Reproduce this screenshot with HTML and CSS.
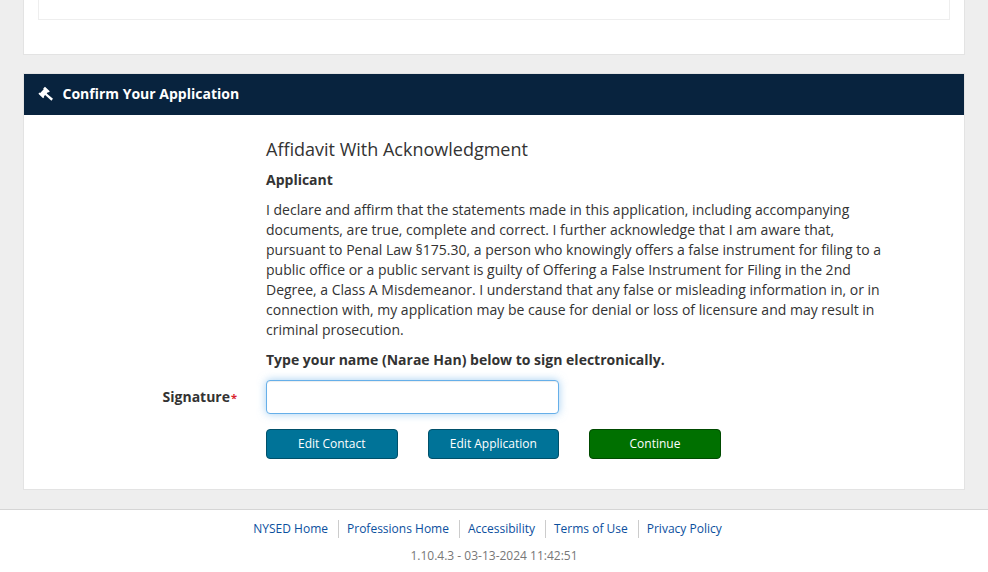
FILE: index.html
```html
<!DOCTYPE html>
<html lang="en">
<head>
<meta charset="utf-8">
<title>Confirm Your Application</title>
<link rel="stylesheet" href="styles.css">
</head>
<body>
<main class="main">
  <section class="card card-top">
    <div class="inner-box"></div>
  </section>
  <section class="card card-confirm">
    <header class="card-header">
      <svg class="gavel" viewBox="0 0 16 16" aria-hidden="true">
        <path d="M7 .8 11.8 5.2 10.7 6.4 10.1 5.9 8.7 7.4 15 12.8 13.4 14.8 7.1 8.9 5.8 10.4 6.3 10.9 5.1 12.2.4 7.8 1.6 6.6 2.2 7.1 5.7 3.2 5.2 2.6z" fill="#fff"/>
      </svg>
      <h2 class="card-title">Confirm Your Application</h2>
    </header>
    <div class="card-body">
      <div class="affidavit">
        <h3 class="affidavit-title">Affidavit With Acknowledgment</h3>
        <p class="role">Applicant</p>
        <p class="statement">I declare and affirm that the statements made in this application, including accompanying documents, are true, complete and correct. I further acknowledge that I am aware that, pursuant to Penal Law §175.30, a person who knowingly offers a false instrument for filing to a public office or a public servant is guilty of Offering a False Instrument for Filing in the 2nd Degree, a Class A Misdemeanor. I understand that any false or misleading information in, or in connection with, my application may be cause for denial or loss of licensure and may result in criminal prosecution.</p>
        <p class="sign-note">Type your name (Narae Han) below to sign electronically.</p>
      </div>
      <div class="signature-row">
        <label class="signature-label" for="signature">Signature<span class="required">*</span></label>
        <input class="signature-input" id="signature" type="text">
      </div>
      <div class="actions">
        <button class="btn btn-blue" type="button">Edit Contact</button>
        <button class="btn btn-blue" type="button">Edit Application</button>
        <button class="btn btn-green" type="button">Continue</button>
      </div>
    </div>
  </section>
</main>
<footer class="footer">
  <nav class="footer-links">
    <a href="#">NYSED Home</a>
    <a href="#">Professions Home</a>
    <a href="#">Accessibility</a>
    <a href="#">Terms of Use</a>
    <a href="#">Privacy Policy</a>
  </nav>
  <p class="version">1.10.4.3 - 03-13-2024 11:42:51</p>
</footer>
</body>
</html>
```
FILE: styles.css
```css
* { box-sizing: border-box; }
html, body { margin: 0; padding: 0; }
body {
  background: #eee;
  color: #333;
  font-family: "Open Sans", "Liberation Sans", sans-serif;
  font-size: 14px;
  line-height: 20px;
  height: 572px;
  overflow: hidden;
}
.main { padding: 0 23px 19px; }
.card {
  background: #fff;
  border: 1px solid #e3e3e3;
}
.card-top {
  border-top: 0;
  height: 55px;
  padding: 0 14px;
}
.inner-box {
  height: 20px;
  border: 1px solid #eee;
  border-top: 0;
}
.card-confirm {
  margin-top: 18px;
  height: 417px;
}
.card-header {
  display: flex;
  align-items: center;
  height: 41px;
  background: #08233e;
  padding-left: 14px;
  padding-bottom: 1px;
  color: #fff;
}
.gavel { width: 16px; height: 16px; margin-right: 8.5px; }
.card-title { margin: 0; font-size: 14px; font-weight: 700; line-height: 20px; }
.card-body { padding-top: 20px; }
.affidavit { margin-left: 242px; width: 622px; }
.affidavit-title { margin: 0 0 7px; font-size: 18px; font-weight: 400; line-height: 28px; }
.role { margin: 0 0 10px; font-weight: 700; }
.statement { margin: 0 0 10px; }
.sign-note { margin: 0; font-weight: 700; }
.signature-row {
  display: flex;
  align-items: center;
  margin-top: 10px;
}
.signature-label {
  width: 214px;
  text-align: right;
  font-weight: 700;
}
.required { color: #d9232e; font-size: 11px; margin: 0 1px 0 1px; }
.signature-input {
  margin-left: 28px;
  width: 293px;
  height: 34px;
  border: 1px solid #66afe9;
  border-radius: 4px;
  background: #fff;
  box-shadow: inset 0 1px 1px rgba(0,0,0,.075), 0 0 8px rgba(102,175,233,.6);
  outline: 0;
}
.actions {
  display: flex;
  gap: 30px;
  margin: 15px 0 0 242px;
}
.btn {
  width: 131.6px;
  height: 30px;
  border-radius: 4px;
  color: #fff;
  font-family: inherit;
  font-size: 12px;
  line-height: 18px;
  padding: 0;
}
.btn-blue { background: #007398; border: 1px solid #00506a; }
.btn-green { background: #007000; border: 1px solid #004a00; }
.footer {
  background: #fff;
  border-top: 1px solid #d5d5d5;
  height: 63px;
  text-align: center;
  font-size: 12px;
  line-height: 18px;
}
.footer-links {
  display: flex;
  justify-content: center;
  padding: 10px 11px 0 0;
}
.footer-links a {
  color: #0b4f9e;
  text-decoration: none;
  padding: 0 10px 0 8px;
  border-left: 1px solid #ccc;
}
.footer-links a:first-child { border-left: 0; }
.version { margin: 9px 0 0; color: #777; }
```
